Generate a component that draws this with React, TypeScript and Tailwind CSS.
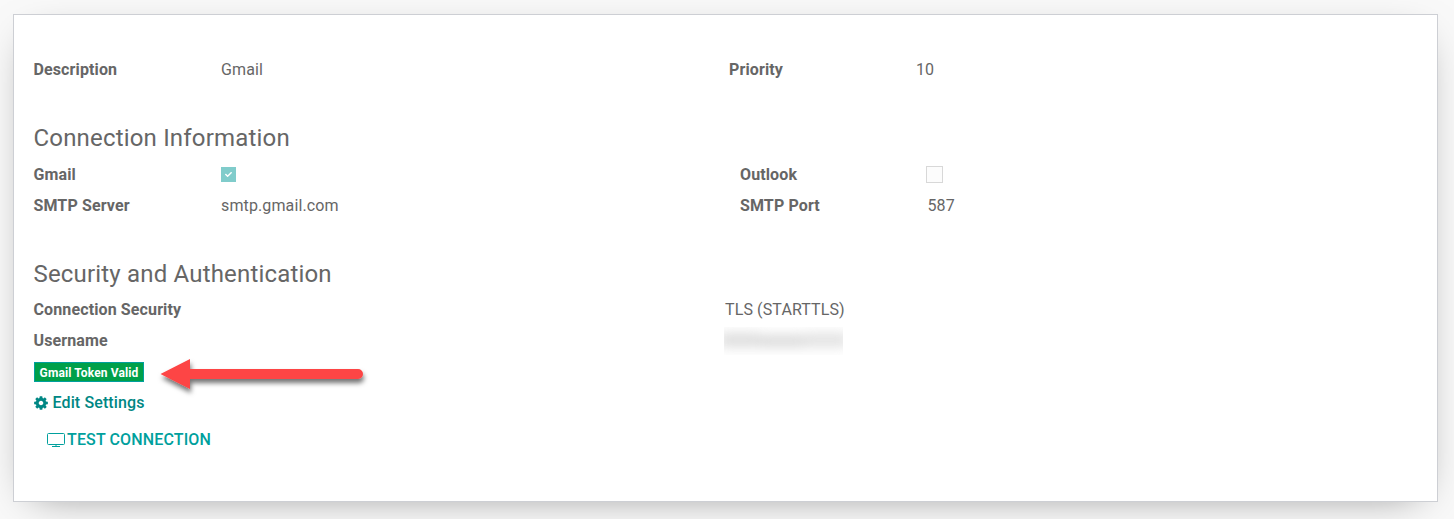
import React from "react";
import { FaCheck } from "react-icons/fa";

function Label({ children }: { children: React.ReactNode }) {
  return <div className="font-bold tracking-[0.12px] text-[#666666]">{children}</div>;
}

function Heading({ children }: { children: React.ReactNode }) {
  return <h2 className="h-9 text-2xl leading-9 font-normal tracking-[0.18px]">{children}</h2>;
}

function Gear() {
  return (
    <svg className="-mt-px" width="16" height="16" viewBox="0 0 1792 1792" fill="currentColor" aria-hidden="true">
      <path d="M1152 896q0-106-75-181t-181-75-181 75-75 181 75 181 181 75 181-75 75-181zm512-109v222q0 12-8 23t-20 13l-185 28q-19 54-39 91 35 50 107 138 10 12 10 25t-9 23q-27 37-99 108t-94 71q-12 0-26-9l-138-108q-44 23-91 38-16 136-29 186-7 28-36 28h-222q-14 0-24.5-8.5t-11.5-21.5l-28-184q-49-16-90-37l-141 107q-10 9-25 9-14 0-25-11-126-114-165-168-7-10-7-23 0-12 8-23 15-21 51-66.5t54-70.5q-27-50-41-99l-183-27q-13-2-21-12.5t-8-23.5v-222q0-12 8-23t19-13l186-28q14-46 39-92-40-57-107-138-10-12-10-24 0-10 9-23 26-36 98.5-107.5t94.5-71.5q13 0 26 10l138 107q44-23 91-38 16-136 29-186 7-28 36-28h222q14 0 24.5 8.5t11.5 21.5l28 184q49 16 90 37l142-107q9-9 24-9 13 0 25 10 129 119 165 170 7 8 7 22 0 12-8 23-15 21-51 66.5t-54 70.5q26 50 41 98l183 28q13 2 21 12.5t8 23.5z" />
    </svg>
  );
}

function Arrow() {
  return (
    <svg className="absolute left-[120px] top-[-10px] overflow-visible" width="220" height="44" viewBox="0 0 220 44" aria-hidden="true">
      <defs>
        <filter id="arrow-shadow" x="-10%" y="-30%" width="120%" height="180%">
          <feDropShadow dx="1" dy="4" stdDeviation="2.5" floodColor="#000" floodOpacity="0.55" />
        </filter>
      </defs>
      <path
        d="M6.5 22 L36 7 V17 H204 A5 5 0 0 1 204 27 H36 V37 Z"
        fill="#fd4444"
        filter="url(#arrow-shadow)"
      />
    </svg>
  );
}

export default function App() {
  return (
    <div className="h-[519px] overflow-hidden bg-[#f9f9f9] pt-[14px] pl-[13px] font-[Roboto,sans-serif] text-base leading-6 tracking-[0.12px] text-[#666666]">
      <main className="h-[488px] w-[1425px] border border-[#cdcfd4] bg-white pr-5 pl-[19.5px] pt-[39px] shadow-[0_10px_40px_-20px_rgba(0,0,0,0.5)]">
        <section className="grid h-[31px] grid-cols-[187.5px_508px_187px_1fr] items-center">
          <Label>Description</Label>
          <span>Gmail</span>
          <Label>Priority</Label>
          <span>10</span>
        </section>

        <section className="pt-[35px]">
          <Heading>Connection Information</Heading>
          <div className="mt-[3px] grid grid-cols-[187.5px_519px_187px_1fr] grid-rows-[31px_31px] items-center">
            <Label>Gmail</Label>
            <span className="flex h-[15px] w-[15px] items-center justify-center bg-[#80cccb] text-white">
              <FaCheck size={7} />
            </span>
            <Label>Outlook</Label>
            <span className="-ml-px h-[17px] w-[17px] border border-[#d8d8d8] bg-[#fcfcfc]" />
            <Label>SMTP Server</Label>
            <span>smtp.gmail.com</span>
            <Label>SMTP Port</Label>
            <span className="pl-[0.5px]">587</span>
          </div>
        </section>

        <section className="pt-[35px]">
          <Heading>Security and Authentication</Heading>
          <div className="mt-[2px] grid grid-cols-[691.5px_1fr] grid-rows-[31px_31px] items-center">
            <Label>Connection Security</Label>
            <span>TLS (STARTTLS)</span>
            <Label>Username</Label>
            <div className="-ml-px h-[28px] w-[119px] overflow-hidden pt-[6px]">
              <div className="-ml-1 flex h-3.5 w-[130px] blur-[6px]">
                <div className="w-10 bg-[#dddddd]" />
                <div className="mt-0.5 w-11 bg-[#dadada]" />
                <div className="w-11 bg-[#e2e2e2]" />
              </div>
            </div>
          </div>

          <div className="relative mt-[6px] ml-[0.5px] flex h-5">
            <span className="flex h-5 w-[110px] items-center justify-center border border-[#00a09d] bg-[#00a04a] pt-0.5 text-xs font-bold text-white">
              Gmail Token Valid
            </span>
            <Arrow />
          </div>
          <button className="mt-[9px] -ml-[0.5px] flex h-6 items-center gap-[3.5px] font-medium tracking-[0.12px] text-[#008784]">
            <Gear />
            Edit Settings
          </button>
          <button className="mt-[13px] ml-[13.5px] flex h-6 items-center gap-[2px] font-medium tracking-[0.14px] text-[#00a09d]">
            <svg className="-mt-px" width="18" height="16" viewBox="0 0 18 16" fill="none" stroke="currentColor" aria-hidden="true">
              <rect x="0.5" y="1.5" width="17" height="11" rx="1" />
              <path d="M9 12.5V14.5M5 14.5H13" />
            </svg>
            TEST CONNECTION
          </button>
        </section>
      </main>
    </div>
  );
}
